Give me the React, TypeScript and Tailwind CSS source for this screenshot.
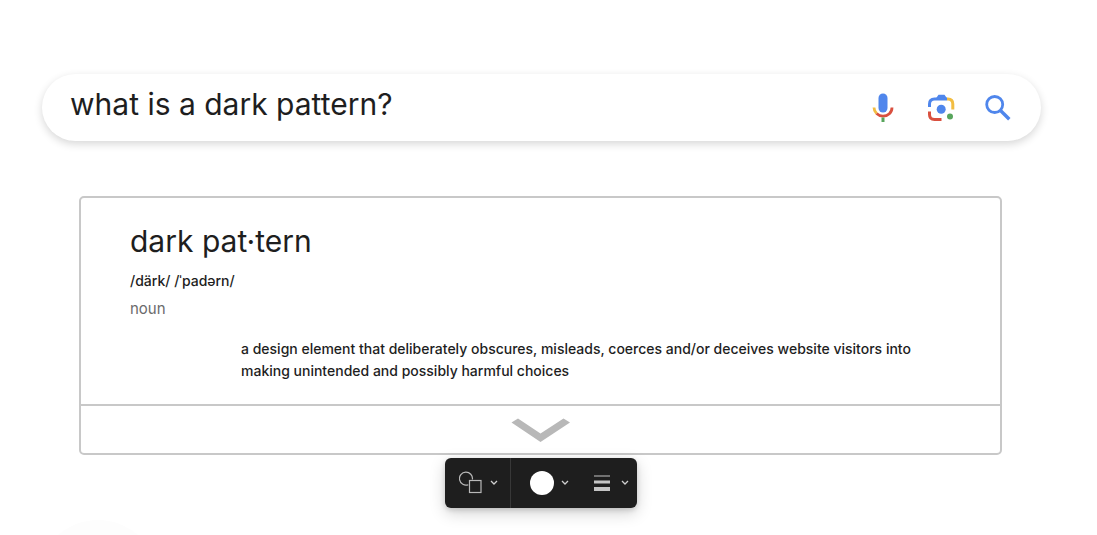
import { useState } from "react";

function MicIcon() {
  return (
    <svg width="22" height="30" viewBox="0 0 22 30" fill="none" aria-hidden="true">
      <rect x="6.5" y="0.5" width="9" height="19" rx="4.5" fill="#4f86ec" />
      <path d="M2 14.5Q2 18 4.6 20.6" stroke="#f2bd42" strokeWidth="2.8" />
      <path d="M4.6 20.6Q7.300 23.200 11 23.200C16 23.200 20 19.500 20 14.500" stroke="#d9503f" strokeWidth="2.8" />
      <path d="M11 24.500V29" stroke="#58a55c" strokeWidth="3" />
    </svg>
  );
}

function LensIcon() {
  return (
    <svg width="27" height="28" viewBox="0 0 27 28" fill="none" aria-hidden="true">
      <path d="M1.500 13V10Q1.500 5 6.500 5H19" stroke="#4f86ec" strokeWidth="3" />
      <path d="M7.500 5L10.500 0.800H16.500L19.500 5Z" fill="#4f86ec" />
      <path d="M19 5H20Q24.800 5 24.800 10V15.500" stroke="#f2bd42" strokeWidth="3" />
      <path d="M1.500 17.500V20.500Q1.500 25.500 6.500 25.500H13.500" stroke="#d9503f" strokeWidth="3" />
      <circle cx="13.200" cy="15.200" r="4.500" fill="#4f86ec" />
      <circle cx="22" cy="22.500" r="3" fill="#58a55c" />
    </svg>
  );
}

function SearchIcon() {
  return (
    <svg width="26" height="26" viewBox="0 0 26 26" fill="none" stroke="#4f86ec" aria-hidden="true">
      <circle cx="9.700" cy="9.500" r="8" strokeWidth="2.800" />
      <path d="M15.500 15.500L24.300 24.300" strokeWidth="3.400" />
    </svg>
  );
}

function Caret() {
  return (
    <svg width="8" height="6" viewBox="0 0 8 6" fill="none" stroke="#cfcfcf" strokeWidth="1.300" aria-hidden="true">
      <path d="M1 1L4 4L7 1" />
    </svg>
  );
}

function ShapesIcon() {
  return (
    <svg width="24" height="24" viewBox="0 0 24 24" fill="none" stroke="#b8b8b8" strokeWidth="1.200" aria-hidden="true">
      <path d="M9.300 13.700A6.500 6.500 0 1 1 13.400 8.500" />
      <rect x="10.500" y="9.500" width="11.500" height="12" />
    </svg>
  );
}

function LinesIcon() {
  return (
    <svg width="16" height="16" viewBox="0 0 16 16" fill="#c4c4c4" aria-hidden="true">
      <rect y="0.500" width="16" height="1" />
      <rect y="5.500" width="16" height="3" />
      <rect y="12" width="16" height="4" />
    </svg>
  );
}

export default function App() {
  const [query, setQuery] = useState("what is a dark pattern?");

  return (
    <main className="h-screen overflow-hidden bg-white pt-[74px] pr-14 pl-[42px] font-['Inter',sans-serif] text-[#1e1e1e]">
      <form
        role="search"
        onSubmit={(e) => e.preventDefault()}
        className="flex h-[67px] items-center rounded-full bg-white pr-[30px] pl-7 shadow-[0_3px_8px_rgba(0,0,0,0.16)]"
      >
        <input
          type="text"
          aria-label="Search"
          value={query}
          onChange={(e) => setQuery(e.target.value)}
          className="min-w-0 flex-1 bg-transparent pb-2 text-[30px] leading-10 outline-none"
        />
        <div className="flex items-center">
          <button type="button" aria-label="Search by voice"><MicIcon /></button>
          <button type="button" aria-label="Search by image" className="mr-[30px] ml-[34px]"><LensIcon /></button>
          <button type="submit" aria-label="Search"><SearchIcon /></button>
        </div>
      </form>

      <div className="mt-[55px] mr-[39px] ml-[37px]">
        <article className="rounded-[5px] border-2 border-[#c8c8c8]">
          <div className="px-[49px] pt-[23px] pb-[22px]">
            <h1 className="text-[30px] leading-10">dark pat·tern</h1>
            <p className="mt-[9px] text-sm leading-[22px] font-medium">/därk/ /ˈpadərn/</p>
            <p className="mt-[6px] text-[15px] leading-[22px] text-[#6b6b6b]">noun</p>
            <p className="mt-[18px] ml-[111px] text-sm leading-[22px] font-medium">
              a design element that deliberately obscures, misleads, coerces and/or deceives website visitors into
              making unintended and possibly harmful choices
            </p>
          </div>
          <button
            type="button"
            aria-label="Show more"
            className="flex h-[49px] w-full items-center justify-center border-t-2 border-[#c8c8c8]"
          >
            <svg width="60" height="24" viewBox="0 0 60 24" fill="#b8b8b8" aria-hidden="true">
              <path d="M0.500 4.500L7 0.500L29.500 15.500L52.500 0.500L59 4.500L29.500 24Z" />
            </svg>
          </button>
        </article>

        <div
          role="toolbar"
          aria-label="Shape options"
          className="mx-auto mt-[3px] flex h-[50px] w-48 items-stretch rounded-md bg-[#1e1e1e] shadow-[0_5px_16px_rgba(0,0,0,0.18),0_2px_5px_rgba(0,0,0,0.15)]"
        >
          <button type="button" aria-label="Shape" className="flex items-center gap-[7px] border-r border-[#383838] pr-3 pl-[14px]">
            <ShapesIcon />
            <Caret />
          </button>
          <button type="button" aria-label="Fill" className="flex items-center gap-[7px] pl-[19px]">
            <span className="size-6 rounded-full bg-white" />
            <Caret />
          </button>
          <button type="button" aria-label="Line weight" className="flex items-center gap-[11px] pl-[25px]">
            <LinesIcon />
            <Caret />
          </button>
        </div>
      </div>

      <div className="mt-[12px] ml-[-4px] size-[120px] rounded-full bg-[#fdfdfd]" />
    </main>
  );
}
